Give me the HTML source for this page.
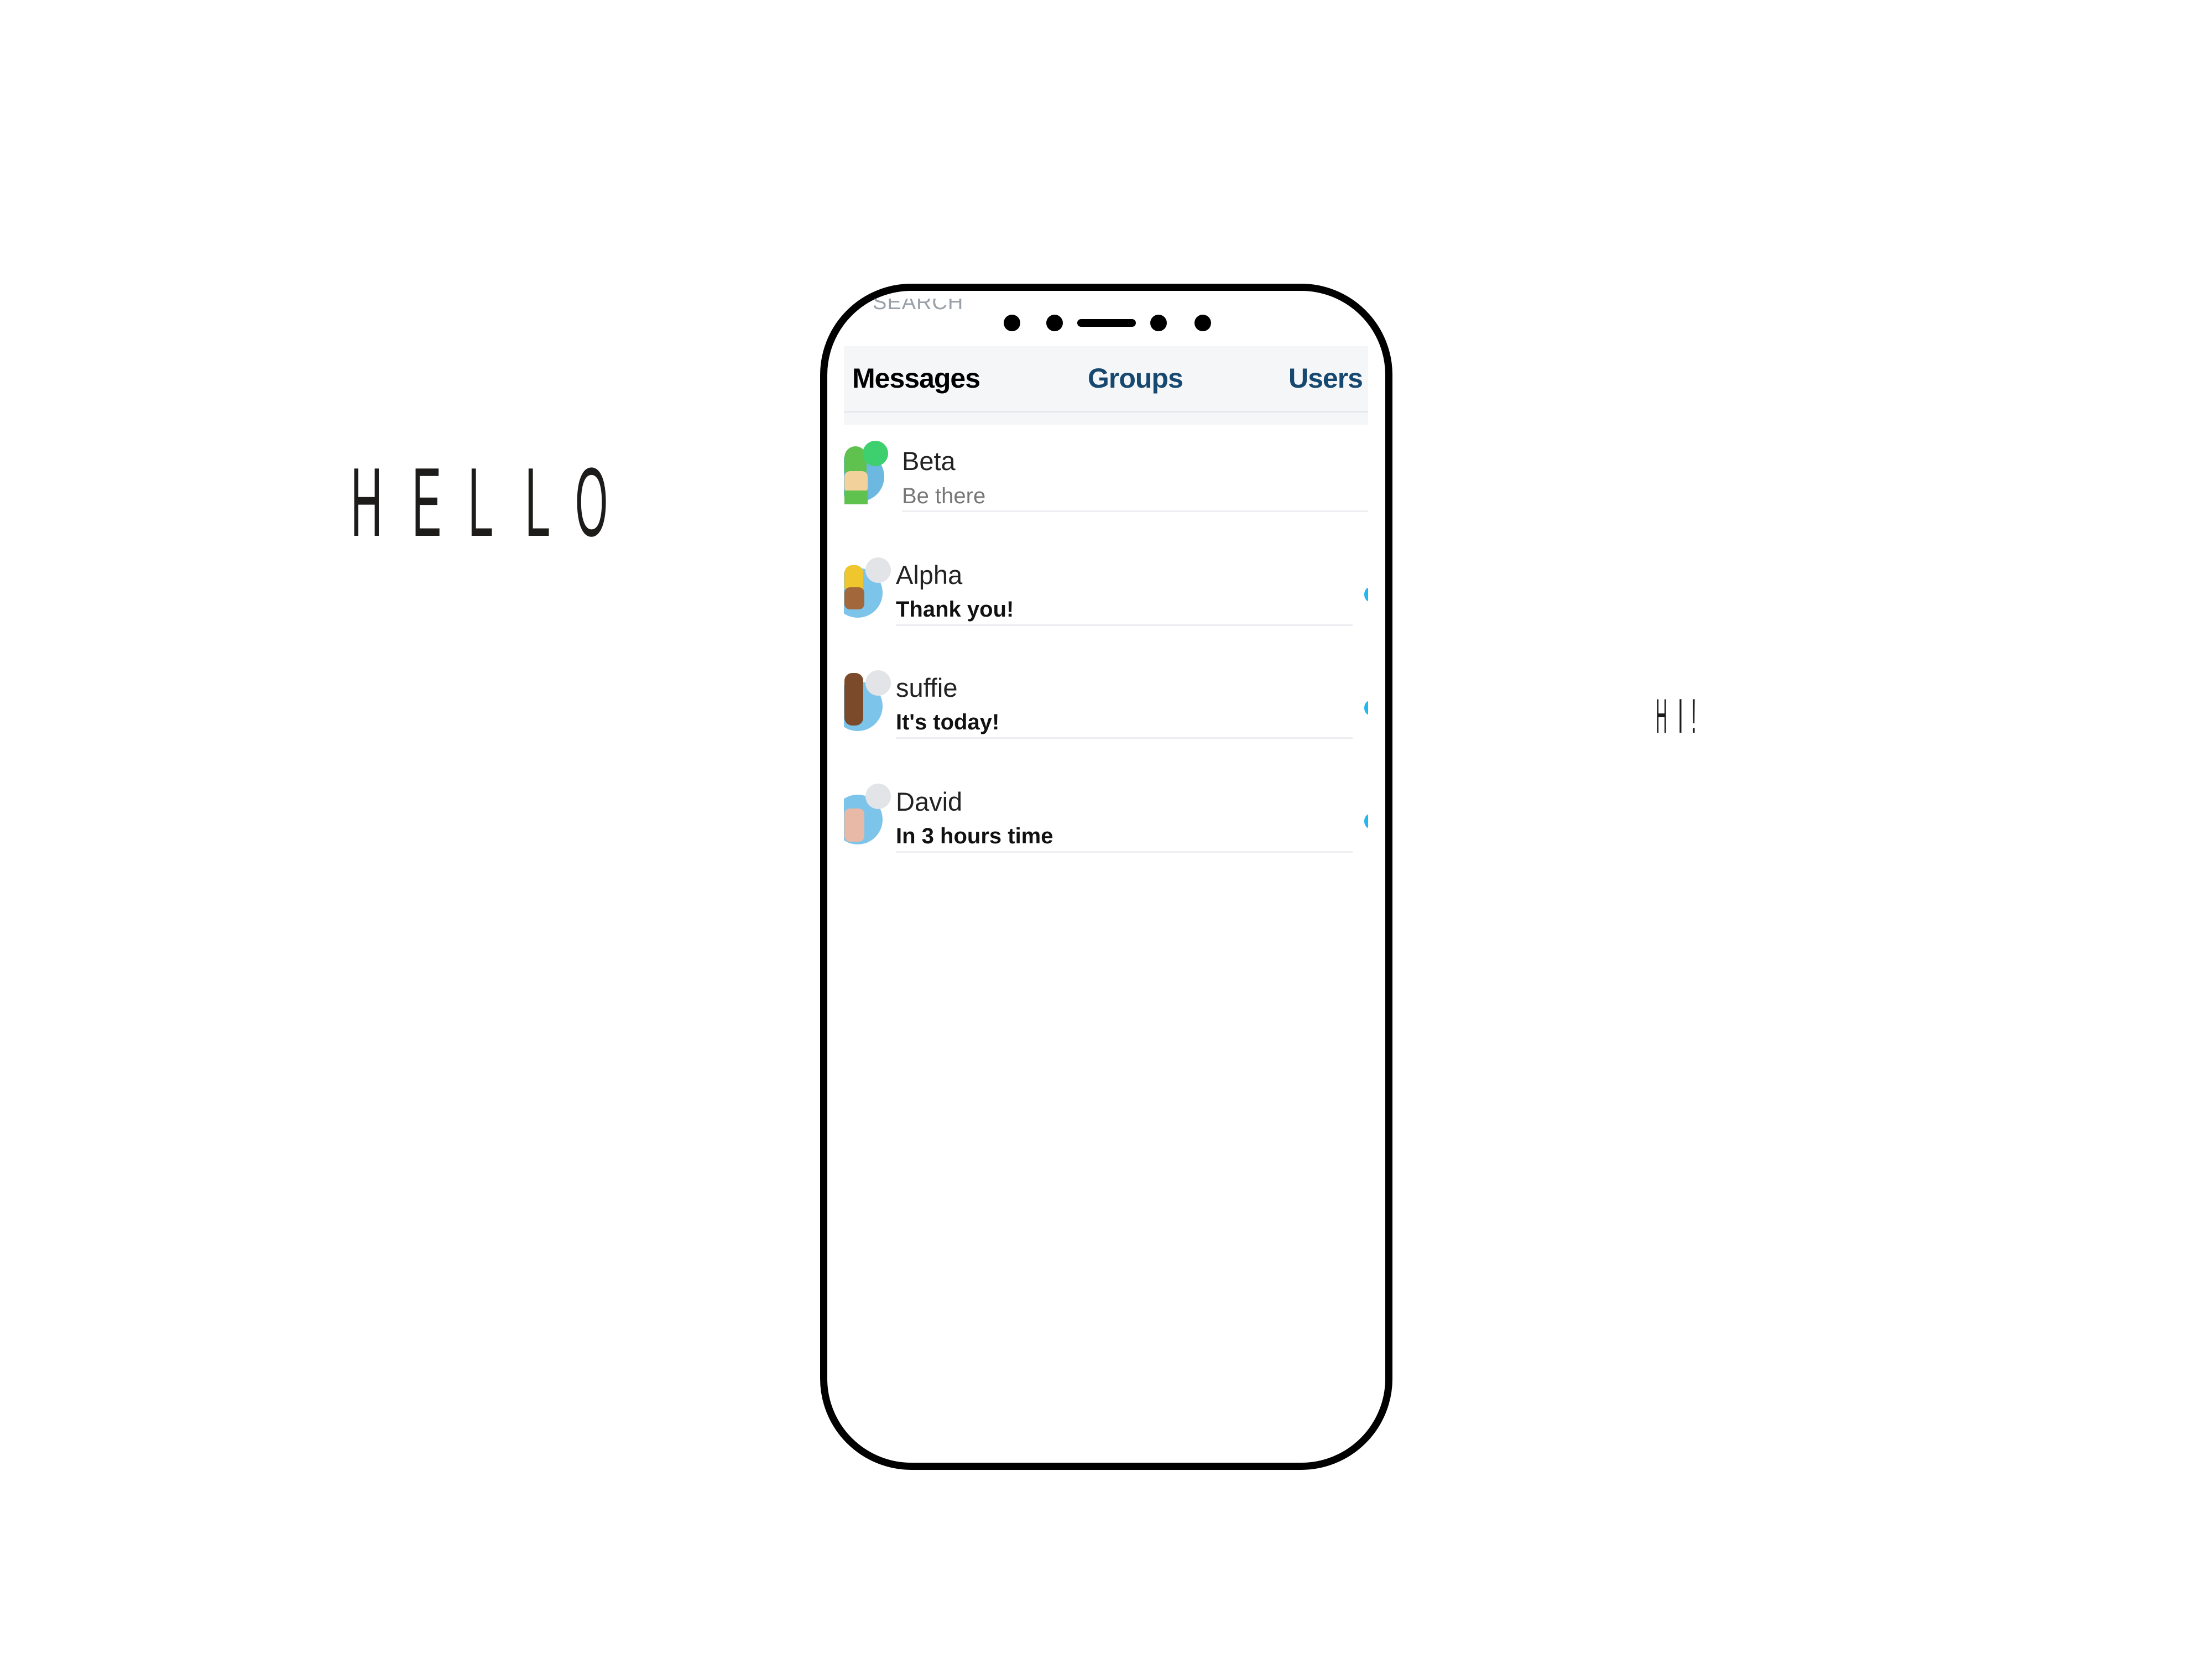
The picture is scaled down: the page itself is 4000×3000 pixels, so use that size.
<!DOCTYPE html>
<html><head><meta charset="utf-8"><style>
html,body{margin:0;padding:0;background:#fff;}
body{width:4000px;height:3000px;position:relative;overflow:hidden;font-family:"Liberation Sans",sans-serif;}
.phone{position:absolute;left:1483px;top:513px;width:1035px;height:2145px;box-sizing:border-box;border:13px solid #000;border-radius:165px;background:#fff;overflow:hidden;}
.screen{position:absolute;left:1526px;top:540px;width:948px;height:1100px;overflow:hidden;}
.abs{position:absolute;}
.dot{position:absolute;background:#000;border-radius:50%;}
.name{position:absolute;font-size:47px;color:#222;line-height:1;white-space:nowrap;}
.sub{position:absolute;font-size:40px;line-height:1;white-space:nowrap;}
.line{position:absolute;height:3px;background:#eceef1;}
.av{position:absolute;width:90px;height:90px;border-radius:50%;background:#7cc4ea;}
</style></head><body>

<svg class="abs" style="left:0;top:0" width="4000" height="3000">
 <g font-family="Liberation Sans" font-size="177" fill="#1d1c1a">
  <text transform="translate(634,969) scale(0.45,1)">H</text>
  <text transform="translate(745,969) scale(0.45,1)">E</text>
  <text transform="translate(846,969) scale(0.47,1)">L</text>
  <text transform="translate(949,969) scale(0.47,1)">L</text>
  <text transform="translate(1040,969) scale(0.43,1)">O</text>
 </g>
 <g font-family="Liberation Sans" font-size="88" fill="#1d1c1a">
  <text transform="translate(2994,1325) scale(0.33,1)">H</text>
  <text transform="translate(3034,1325) scale(0.4,1)">I</text>
  <text transform="translate(3058,1325) scale(0.4,1)">!</text>
 </g>
</svg>

<div class="phone"></div>

<div class="screen">
  <div class="abs" style="left:52px;top:-14px;font-size:38px;color:#9aa0a8;letter-spacing:1px;">SEARCH</div>
  <div class="abs" style="left:0;top:86px;width:948px;height:142px;background:#f5f6f8;"></div>
  <div class="abs" style="left:0;top:203px;width:948px;height:3px;background:#e6e8eb;"></div>
  <div class="abs" style="left:15px;top:115px;font-size:50px;font-weight:bold;color:#000;letter-spacing:-1px;">Messages</div>
  <div class="abs" style="left:441px;top:115px;font-size:50px;font-weight:bold;color:#17486f;letter-spacing:-1px;">Groups</div>
  <div class="abs" style="left:804px;top:115px;font-size:50px;font-weight:bold;color:#17486f;letter-spacing:-1px;">Users</div>
</div>

<!-- notch dots -->
<div class="dot" style="left:1834px;top:569px;width:30px;height:30px;" hidden></div>
<div class="dot" style="left:1833px;top:569px;width:30px;height:30px;margin-left:-18px;"></div>
<div class="dot" style="left:1910px;top:569px;width:30px;height:30px;margin-left:-18px;"></div>
<div class="abs" style="left:1948px;top:577px;width:106px;height:14px;background:#000;border-radius:8px;"></div>
<div class="dot" style="left:2080px;top:569px;width:30px;height:30px;"></div>
<div class="dot" style="left:2160px;top:569px;width:30px;height:30px;"></div>

<div class="screen" style="top:772px;height:900px;">
  <!-- row 1 -->
  <div class="av" style="left:-17px;top:45px;background:#6cb8e0;"></div>
  <div class="abs" style="left:1px;top:35px;width:40px;height:50px;background:#5fc24e;border-radius:20px 20px 4px 4px;"></div>
  <div class="abs" style="left:1px;top:80px;width:42px;height:40px;background:#f2d29a;border-radius:10px;"></div>
  <div class="abs" style="left:1px;top:115px;width:42px;height:25px;background:#5fc24e;"></div>
  <div class="abs" style="left:34px;top:25px;width:46px;height:46px;border-radius:50%;background:#3ed06e;"></div>
  <div class="name" style="left:105px;top:38px;">Beta</div>
  <div class="sub" style="left:105px;top:105px;color:#777;">Be there</div>
  <div class="line" style="left:105px;top:151px;width:843px;"></div>

  <!-- row 2 -->
  <div class="av" style="left:-20px;top:255px;"></div>
  <div class="abs" style="left:1px;top:250px;width:34px;height:45px;background:#f0c62e;border-radius:14px 14px 4px 4px;"></div>
  <div class="abs" style="left:1px;top:290px;width:36px;height:40px;background:#a2683c;border-radius:10px;"></div>
  <div class="abs" style="left:39px;top:236px;width:46px;height:46px;border-radius:50%;background:#e3e4e7;"></div>
  <div class="name" style="left:94px;top:244px;">Alpha</div>
  <div class="sub" style="left:94px;top:310px;color:#111;font-weight:bold;">Thank you!</div>
  <div class="line" style="left:94px;top:357px;width:826px;"></div>
  <div class="abs" style="left:941px;top:290px;width:20px;height:26px;border-radius:50%;background:#21b8f0;"></div>

  <!-- row 3 -->
  <div class="av" style="left:-20px;top:460px;"></div>
  <div class="abs" style="left:1px;top:445px;width:34px;height:95px;background:#7a4a2a;border-radius:14px;"></div>
  <div class="abs" style="left:39px;top:440px;width:46px;height:46px;border-radius:50%;background:#e3e4e7;"></div>
  <div class="name" style="left:94px;top:448px;">suffie</div>
  <div class="sub" style="left:94px;top:514px;color:#111;font-weight:bold;">It's today!</div>
  <div class="line" style="left:94px;top:561px;width:826px;"></div>
  <div class="abs" style="left:941px;top:495px;width:20px;height:26px;border-radius:50%;background:#21b8f0;"></div>

  <!-- row 4 -->
  <div class="av" style="left:-20px;top:665px;"></div>
  <div class="abs" style="left:1px;top:690px;width:36px;height:60px;background:#e8b9a6;border-radius:10px;"></div>
  <div class="abs" style="left:39px;top:645px;width:46px;height:46px;border-radius:50%;background:#e3e4e7;"></div>
  <div class="name" style="left:94px;top:654px;">David</div>
  <div class="sub" style="left:94px;top:720px;color:#111;font-weight:bold;">In 3 hours time</div>
  <div class="line" style="left:94px;top:767px;width:826px;"></div>
  <div class="abs" style="left:941px;top:700px;width:20px;height:26px;border-radius:50%;background:#21b8f0;"></div>
</div>

</body></html>
